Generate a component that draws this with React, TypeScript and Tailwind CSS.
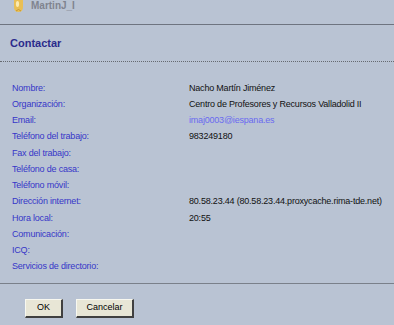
import React from "react";

const rows: [string, string, string?][] = [
  ["Nombre:", "Nacho Martín Jiménez"],
  ["Organización:", "Centro de Profesores y Recursos Valladolid II"],
  ["Email:", "imaj0003@iespana.es", "link"],
  ["Teléfono del trabajo:", "983249180"],
  ["Fax del trabajo:", ""],
  ["Teléfono de casa:", ""],
  ["Teléfono móvil:", ""],
  ["Dirección internet:", "80.58.23.44 (80.58.23.44.proxycache.rima-tde.net)"],
  ["Hora local:", "20:55"],
  ["Comunicación:", ""],
  ["ICQ:", ""],
  ["Servicios de directorio:", ""],
];

export default function App() {
  return (
    <div
      className="w-[394px] h-[325px] overflow-hidden bg-[#b9c3d3] flex flex-col"
      style={{ fontFamily: '"Liberation Sans", Arial, sans-serif' }}
    >
      <div className="h-[25px] flex items-start pl-[13px] -mt-[1px]">
        <svg width="11" height="14" viewBox="0 0 11 14">
          <path d="M1 0 L10 0 L10 8 Q10 13 5.5 13 Q1 13 1 8 Z" fill="#e9bf55" />
          <ellipse cx="4.5" cy="5" rx="1.6" ry="3" fill="#fbeab0" />
          <path d="M3 12 Q5.5 9 8 12" stroke="#c89830" strokeWidth="1" fill="none" />
        </svg>
        <span className="ml-[7px] mt-[1px] text-[10px] font-bold text-[#80848f] leading-[11px]">MartinJ_I</span>
      </div>
      <div className="h-px bg-[#6e7480]" />
      <div className="h-[36px] flex items-center pl-[10px] pt-[1px]">
        <span className="text-[11px] font-bold text-[#2b2b8c] leading-none">Contactar</span>
      </div>
      <div className="h-px border-t border-dotted border-[#666a70]" />
      <div className="flex flex-col pt-[18px] pl-[12px]">
        {rows.map(([l, v, k]) => (
          <div key={l} className="flex h-[16.25px] items-center text-[9px] leading-none tracking-[-0.2px]">
            <span className="w-[177px] text-[#3636c8]">{l}</span>
            <span className={k ? "text-[#6a6af0]" : "text-[#111]"}>{v}</span>
          </div>
        ))}
      </div>
      <div className="mt-[8px] h-px bg-[#7a808a]" />
      <div className="flex gap-[13px] pl-[25px] pt-[15px]">
        <button className="w-[38px] h-[19px] bg-[#e8e6d6] text-[9px] text-black border border-t-[#f8f8f0] border-l-[#f8f8f0] border-r-[#404040] border-b-[#404040] border-r-2 border-b-2">
          OK
        </button>
        <button className="w-[58px] h-[19px] bg-[#e8e6d6] text-[9px] text-black border border-t-[#f8f8f0] border-l-[#f8f8f0] border-r-[#404040] border-b-[#404040] border-r-2 border-b-2">
          Cancelar
        </button>
      </div>
    </div>
  );
}
